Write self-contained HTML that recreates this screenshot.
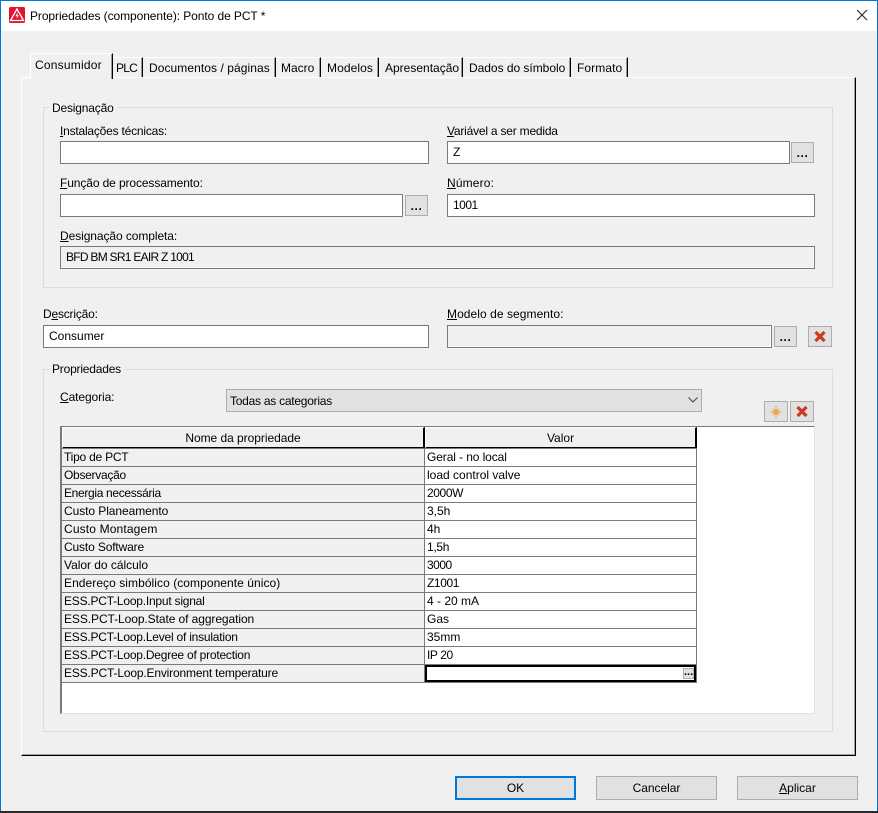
<!DOCTYPE html>
<html lang="pt"><head><meta charset="utf-8"><title>Propriedades</title>
<style>
html,body{margin:0;padding:0;width:878px;height:813px;overflow:hidden;background:#f0f0f0}
*{box-sizing:border-box}
body{position:relative;font:12px/14px "Liberation Sans",sans-serif;color:#000;letter-spacing:0}
div,span.t{position:absolute;white-space:nowrap}
span.t{height:14px;line-height:14px}
.in{border:1px solid #7a7a7a;background:#fff;height:23px;padding:3px 0 0 5px}
.ro{border:1px solid #7a7a7a;background:#f0f0f0;box-shadow:inset -1px -1px 0 #fff;height:23px;padding:3px 0 0 5px}
.b{background:#e1e1e1;border:1px solid #adadad;height:21px;width:23px;text-align:center;font-weight:bold;line-height:20px;font-size:12px;letter-spacing:.6px}
.grp{border:1px solid #dcdcdc}
.lg{background:#f0f0f0;padding:0 3px 0 3px}
.tab{top:57px;height:20px;border-top:1px solid #fff;border-right:1px solid #000;box-shadow:inset -1px 0 0 #9a9a9a;line-height:20px;background:#f0f0f0}
.cell{height:19px;border:1px solid #7a7a7a;padding:1px 0 0 2px;line-height:15px}
.n{left:61px;width:364px;background:#f0f0f0}
.v{left:424px;width:273px;background:#fff;padding-left:2px}
.h{top:427px;height:22px;background:#f0f0f0;border:1px solid #000;border-top-color:#fff;border-left-color:#fff;border-width:1px 2px 2px 1px;text-align:center;line-height:20px}
.btn{top:776px;width:121px;height:24px;background:#e1e1e1;border:1px solid #adadad;text-align:center;line-height:22px}
u{text-decoration:underline}
</style></head><body>
<div style="left:0;top:0;width:878px;height:813px;border:1px solid #0078d7;border-bottom:none"></div>
<div style="left:1px;top:1px;width:876px;height:30px;background:#fff"></div>
<div style="left:0;top:811px;width:878px;height:2px;background:#2b2b2b"></div>
<svg style="position:absolute;left:9px;top:7px" width="16" height="16" viewBox="0 0 16 16"><rect width="16" height="16" rx="1.5" fill="#e2142d"/><path d="M8 2 L14.5 13.5 H1.5 Z" fill="none" stroke="#fff" stroke-width="1.3"/><path d="M8.8 5 L6.4 9.2 H8.4 L7.2 12 L10 8.4 H8.2 Z" fill="#fff"/></svg>
<span class="t" style="position:absolute;left:30px;top:9px;letter-spacing:-.08px">Propriedades (componente): Ponto de PCT *</span>
<svg style="position:absolute;left:856px;top:9px" width="12" height="12" viewBox="0 0 12 12"><path d="M1 1 L11 11 M11 1 L1 11" stroke="#222" stroke-width="1.1" fill="none"/></svg>

<!-- tab panel -->
<div style="left:21px;top:77px;width:835px;height:679px;border-left:1px solid #fff;border-top:1px solid #fff;border-right:1px solid #000;border-bottom:1px solid #000;box-shadow:inset -1px -1px 0 #a0a0a0"></div>
<div class="tab" style="left:113px;width:30px;padding-left:3px;letter-spacing:-.8px">PLC</div>
<div class="tab" style="left:143px;width:133px;padding-left:6px;letter-spacing:.07px">Documentos / páginas</div>
<div class="tab" style="left:276px;width:45px;padding-left:5px">Macro</div>
<div class="tab" style="left:321px;width:58px;padding-left:6px;letter-spacing:.08px">Modelos</div>
<div class="tab" style="left:379px;width:84px;padding-left:6px">Apresentação</div>
<div class="tab" style="left:463px;width:108px;padding-left:6px;letter-spacing:-.03px">Dados do símbolo</div>
<div class="tab" style="left:571px;width:57px;padding-left:6px;letter-spacing:.08px">Formato</div>
<div style="left:30px;top:53px;width:83px;height:26px;background:#f0f0f0;border-top:1px solid #fff;border-left:1px solid #fff;border-right:1px solid #000;box-shadow:inset -1px 0 0 #9a9a9a;padding-left:4px;line-height:23px;letter-spacing:.22px">Consumidor</div>

<!-- Designação -->
<div class="grp" style="left:43px;top:107px;width:790px;height:181px"></div>
<span class="t lg" style="position:absolute;left:49px;top:101px;letter-spacing:-.18px">Designação</span>
<span class="t" style="position:absolute;left:60px;top:124px;letter-spacing:-.21px"><u>I</u>nstalações técnicas:</span>
<div class="in" style="left:60px;top:141px;width:369px"></div>
<span class="t" style="position:absolute;left:447px;top:124px;letter-spacing:-.21px"><u>V</u>ariável a ser medida</span>
<div class="in" style="left:447px;top:141px;width:343px">Z</div>
<div class="b" style="left:791px;top:142px">...</div>
<span class="t" style="position:absolute;left:60px;top:176px;letter-spacing:-.11px"><u>F</u>unção de processamento:</span>
<div class="in" style="left:60px;top:194px;width:343px"></div>
<div class="b" style="left:405px;top:195px">...</div>
<span class="t" style="position:absolute;left:447px;top:176px;letter-spacing:.15px"><u>N</u>úmero:</span>
<div class="in" style="left:447px;top:194px;width:368px;letter-spacing:-.5px">1001</div>
<span class="t" style="position:absolute;left:60px;top:229px;letter-spacing:-.08px"><u>D</u>esignação completa:</span>
<div class="ro" style="left:60px;top:246px;width:755px;letter-spacing:-.73px">BFD BM SR1 EAIR Z 1001</div>

<span class="t" style="position:absolute;left:43px;top:307px;letter-spacing:-.2px">D<u>e</u>scrição:</span>
<div class="in" style="left:43px;top:325px;width:386px">Consumer</div>
<span class="t" style="position:absolute;left:447px;top:307px;letter-spacing:.06px"><u>M</u>odelo de segmento:</span>
<div class="ro" style="left:447px;top:325px;width:325px"></div>
<div class="b" style="left:774px;top:326px">...</div>
<div class="b" style="left:808px;top:326px;width:24px"><svg style="position:absolute;left:5px;top:4px" width="12" height="11" viewBox="0 0 12 11"><path d="M1.5 1 L10.5 10 M10.5 1 L1.5 10" stroke="#cb3a1e" stroke-width="3.2" fill="none"/></svg></div>

<!-- Propriedades -->
<div class="grp" style="left:43px;top:369px;width:790px;height:363px"></div>
<span class="t lg" style="position:absolute;left:49px;top:362px;letter-spacing:-.2px">Propriedades</span>
<span class="t" style="position:absolute;left:60px;top:390px;letter-spacing:-.1px"><u>C</u>ategoria:</span>
<div style="left:226px;top:389px;width:476px;height:23px;background:#e1e1e1;border:1px solid #adadad;padding:4px 0 0 3px;letter-spacing:-.25px">Todas as categorias</div>
<svg style="position:absolute;left:688px;top:397px" width="10" height="6" viewBox="0 0 10 6"><path d="M.5 .5 L5 5 L9.5 .5" fill="none" stroke="#444" stroke-width="1"/></svg>
<div class="b" style="left:764px;top:401px;width:24px"><svg style="position:absolute;left:5px;top:4px" width="12" height="12" viewBox="0 0 12 12"><path d="M6 0 V12 M0 6 H12" stroke="#e8a64a" stroke-width="1"/><path d="M2.5 2.5 L9.5 9.5 M9.5 2.5 L2.5 9.5" stroke="#e8a64a" stroke-width=".7"/><rect x="3.5" y="3.5" width="5" height="5" fill="#e8a64a"/></svg></div>
<div class="b" style="left:790px;top:401px;width:24px"><svg style="position:absolute;left:5px;top:4px" width="12" height="11" viewBox="0 0 12 11"><path d="M1.5 1 L10.5 10 M10.5 1 L1.5 10" stroke="#cb3a1e" stroke-width="3.2" fill="none"/></svg></div>

<!-- table -->
<div style="left:60px;top:426px;width:755px;height:288px;background:#fff;border-left:2px solid #7a7a7a;border-top:1px solid #7a7a7a;border-right:1px solid #e3e3e3;border-bottom:1px solid #e3e3e3"></div>
<div class="h" style="left:62px;width:363px;letter-spacing:-.04px">Nome da propriedade</div>
<div class="h" style="left:425px;width:272px">Valor</div>
<div class="cell n" style="top:448px;letter-spacing:-.23px">Tipo de PCT</div><div class="cell v" style="top:448px;letter-spacing:-.1px">Geral - no local</div>
<div class="cell n" style="top:466px;letter-spacing:-.28px">Observação</div><div class="cell v" style="top:466px">load control valve</div>
<div class="cell n" style="top:484px;letter-spacing:-.33px">Energia necessária</div><div class="cell v" style="top:484px;letter-spacing:-.4px">2000W</div>
<div class="cell n" style="top:502px;letter-spacing:-.07px">Custo Planeamento</div><div class="cell v" style="top:502px">3,5h</div>
<div class="cell n" style="top:520px;letter-spacing:.15px">Custo Montagem</div><div class="cell v" style="top:520px">4h</div>
<div class="cell n" style="top:538px;letter-spacing:-.14px">Custo Software</div><div class="cell v" style="top:538px;letter-spacing:-.3px">1,5h</div>
<div class="cell n" style="top:556px;letter-spacing:-.03px">Valor do cálculo</div><div class="cell v" style="top:556px;letter-spacing:-.5px">3000</div>
<div class="cell n" style="top:574px;letter-spacing:.06px">Endereço simbólico (componente único)</div><div class="cell v" style="top:574px;letter-spacing:-.4px">Z1001</div>
<div class="cell n" style="top:592px;letter-spacing:-.22px">ESS.PCT-Loop.Input signal</div><div class="cell v" style="top:592px">4 - 20 mA</div>
<div class="cell n" style="top:610px;letter-spacing:-.08px">ESS.PCT-Loop.State of aggregation</div><div class="cell v" style="top:610px">Gas</div>
<div class="cell n" style="top:628px;letter-spacing:-.22px">ESS.PCT-Loop.Level of insulation</div><div class="cell v" style="top:628px">35mm</div>
<div class="cell n" style="top:646px;letter-spacing:-.22px">ESS.PCT-Loop.Degree of protection</div><div class="cell v" style="top:646px;letter-spacing:-.4px">IP 20</div>
<div class="cell n" style="top:664px;letter-spacing:-.17px">ESS.PCT-Loop.Environment temperature</div>
<div style="left:424px;top:664px;width:273px;height:19px;background:#fff;border:1px solid #7a7a7a;box-shadow:inset 0 0 0 2px #000"></div>
<div style="left:683px;top:668px;width:11px;height:11px;background:#e1e1e1;border:1px solid #adadad;font-weight:bold;font-size:11px;line-height:7px;text-align:center;letter-spacing:0">...</div>

<div class="btn" style="left:455px;border:2px solid #0078d7;line-height:20px">OK</div>
<div class="btn" style="left:596px;letter-spacing:-.03px">Cancelar</div>
<div class="btn" style="left:737px"><u>A</u>plicar</div>
</body></html>
